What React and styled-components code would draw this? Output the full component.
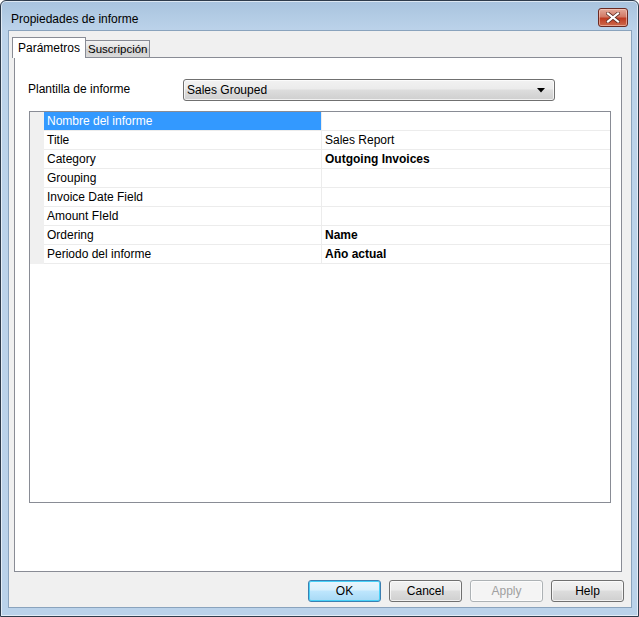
import React, { useState } from "react";
import styled, { createGlobalStyle } from "styled-components";

const GlobalStyle = createGlobalStyle`
  html, body { margin: 0; padding: 0; background: #ffffff; }
  body { font-family: "Liberation Sans", Arial, sans-serif; font-size: 12px; color: #000; }
  * { box-sizing: border-box; }
`;

const rows = [
  { name: "Nombre del informe", value: "", selected: true },
  { name: "Title", value: "Sales Report" },
  { name: "Category", value: "Outgoing Invoices", bold: true },
  { name: "Grouping", value: "" },
  { name: "Invoice Date Field", value: "" },
  { name: "Amount FIeld", value: "" },
  { name: "Ordering", value: "Name", bold: true },
  { name: "Periodo del informe", value: "Año actual", bold: true },
];

function App() {
  const [tab, setTab] = useState("params");
  return (
    <>
      <GlobalStyle />
      <Window>
        <TitleBar>
          <Title>Propiedades de informe</Title>
          <CloseButton>
            <svg width="14" height="11" viewBox="0 0 14 11">
              <path d="M2 1.5 L12 9.5 M12 1.5 L2 9.5" stroke="#5a2a22" strokeWidth="3.6" strokeLinecap="square" />
              <path d="M2 1.5 L12 9.5 M12 1.5 L2 9.5" stroke="#ffffff" strokeWidth="2.2" strokeLinecap="square" />
            </svg>
          </CloseButton>
        </TitleBar>
        <Client>
          <TabStrip>
            <Tab active={tab === "params"} onClick={() => setTab("params")}>Parámetros</Tab>
            <Tab active={tab === "sub"} onClick={() => setTab("sub")}>Suscripción</Tab>
          </TabStrip>
          <TabPanel>
            <TemplateRow>
              <Label>Plantilla de informe</Label>
              <Combo>
                <span>Sales Grouped</span>
                <svg width="8" height="5" viewBox="0 0 8 5">
                  <path d="M0 0 L8 0 L4 4.5 Z" fill="#000" />
                </svg>
              </Combo>
            </TemplateRow>
            <Grid>
              {rows.map((r) => (
                <GridRow key={r.name}>
                  <Gutter />
                  <NameCell selected={r.selected}>{r.name}</NameCell>
                  <ValueCell bold={r.bold}>{r.value}</ValueCell>
                </GridRow>
              ))}
            </Grid>
          </TabPanel>
          <ButtonBar>
            <Button primary>OK</Button>
            <Button>Cancel</Button>
            <Button disabled>Apply</Button>
            <Button>Help</Button>
          </ButtonBar>
        </Client>
      </Window>
    </>
  );
}

const Window = styled.div`
  width: 639px;
  height: 617px;
  border: 1px solid #2e3b4b;
  border-radius: 6px 6px 0 0;
  background: linear-gradient(to bottom, #a8c3de 0px, #bcd3ea 30px, #bad2ea 100%);
  display: flex;
  flex-direction: column;
  padding: 0 6px 8px 7px;
  box-shadow: inset 0 0 0 1px rgba(255, 255, 255, 0.6);
`;

const TitleBar = styled.div`
  height: 29px;
  display: flex;
  align-items: center;
  justify-content: space-between;
  padding: 7px 4px 0 3px;
`;

const Title = styled.div`
  font-size: 12px;
  color: #000;
  padding-bottom: 1px;
`;

const CloseButton = styled.div`
  width: 30px;
  height: 19px;
  margin-bottom: 3px;
  border: 1px solid #6b2a22;
  border-radius: 3px;
  background: linear-gradient(to bottom, #e3a99a 0%, #d27a66 45%, #bf3b22 55%, #cd6a4c 100%);
  box-shadow: inset 0 0 0 1px rgba(255, 220, 210, 0.5);
  display: flex;
  align-items: center;
  justify-content: center;
`;

const Client = styled.div`
  flex: 1;
  background: #f0f0f0;
  border: 1px solid #8aa3bd;
  display: flex;
  flex-direction: column;
  padding: 6px 8px 0 3px;
`;

const TabStrip = styled.div`
  display: flex;
  align-items: flex-end;
  height: 21px;
  position: relative;
  z-index: 1;
  margin-bottom: -1px;
`;

const Tab = styled.div`
  height: ${(p) => (p.active ? "21px" : "18px")};
  padding: 0 ${(p) => (p.active ? "5px" : "2px")};
  margin-left: ${(p) => (p.active ? "0" : "-1px")};
  border: 1px solid #898c95;
  border-bottom: ${(p) => (p.active ? "none" : "1px solid #898c95")};
  background: ${(p) => (p.active ? "#ffffff" : "linear-gradient(to bottom, #f2f2f2, #dedede 50%, #d0d0d0 51%, #dadada)")};
  font-size: ${(p) => (p.active ? "12px" : "11.5px")};
  display: flex;
  align-items: center;
  padding-bottom: ${(p) => (p.active ? "1px" : "0")};
  cursor: default;
  position: relative;
  z-index: ${(p) => (p.active ? 2 : 1)};
`;

const TabPanel = styled.div`
  height: 515px;
  margin-left: 2px;
  margin-right: 1px;
  background: #ffffff;
  border: 1px solid #898c95;
  padding: 21px 12px 0 13px;
  display: flex;
  flex-direction: column;
`;

const TemplateRow = styled.div`
  display: flex;
  align-items: center;
  height: 22px;
  margin-bottom: 10px;
`;

const Label = styled.div`
  width: 155px;
  font-size: 12px;
  padding-bottom: 2px;
`;

const Combo = styled.div`
  width: 372px;
  height: 22px;
  border: 1px solid #707070;
  border-radius: 3px;
  background: linear-gradient(to bottom, #f2f2f2 0%, #ebebeb 45%, #dddddd 50%, #cfcfcf 100%);
  box-shadow: inset 0 0 0 1px rgba(255, 255, 255, 0.7);
  display: flex;
  align-items: center;
  justify-content: space-between;
  padding: 0 9px 0 3px;
  font-size: 12px;
`;

const Grid = styled.div`
  width: 582px;
  height: 392px;
  border: 1px solid #898c95;
  background: #ffffff;
  display: flex;
  flex-direction: column;
  margin-left: 1px;
`;

const GridRow = styled.div`
  display: flex;
  height: 19px;
`;

const Gutter = styled.div`
  width: 14px;
  background: #f0f0f0;
`;

const NameCell = styled.div`
  width: 278px;
  padding-left: 3px;
  display: flex;
  align-items: center;
  border-bottom: 1px solid #ececec;
  border-right: 1px solid #ececec;
  background: ${(p) => (p.selected ? "#3399ff" : "#ffffff")};
  color: ${(p) => (p.selected ? "#ffffff" : "#000000")};
  white-space: nowrap;
`;

const ValueCell = styled.div`
  flex: 1;
  padding-left: 3px;
  display: flex;
  align-items: center;
  border-bottom: 1px solid #ececec;
  font-weight: ${(p) => (p.bold ? 700 : 400)};
  white-space: nowrap;
`;

const ButtonBar = styled.div`
  display: flex;
  justify-content: flex-end;
  gap: 8px;
  padding: 8px 0 0 0;
  margin-right: -1px;
`;

const Button = styled.button`
  width: 73px;
  height: 22px;
  font-family: "Liberation Sans", Arial, sans-serif;
  font-size: 12px;
  border-radius: 3px;
  padding: 0;
  border: 1px solid ${(p) => (p.primary ? "#3c7fb1" : p.disabled ? "#adb2b5" : "#707070")};
  color: ${(p) => (p.disabled ? "#a0a0a0" : "#000")};
  background: ${(p) =>
    p.disabled
      ? "#f4f4f4"
      : p.primary
      ? "linear-gradient(to bottom, #eaf6fd 0%, #d9f0fc 45%, #bee6fd 50%, #a7d9f5 100%)"
      : "linear-gradient(to bottom, #f2f2f2 0%, #ebebeb 45%, #dddddd 50%, #cfcfcf 100%)"};
  box-shadow: ${(p) => (p.primary ? "inset 0 0 0 1px #48d1f8" : "inset 0 0 0 1px rgba(255,255,255,0.7)")};
`;

export default App;
